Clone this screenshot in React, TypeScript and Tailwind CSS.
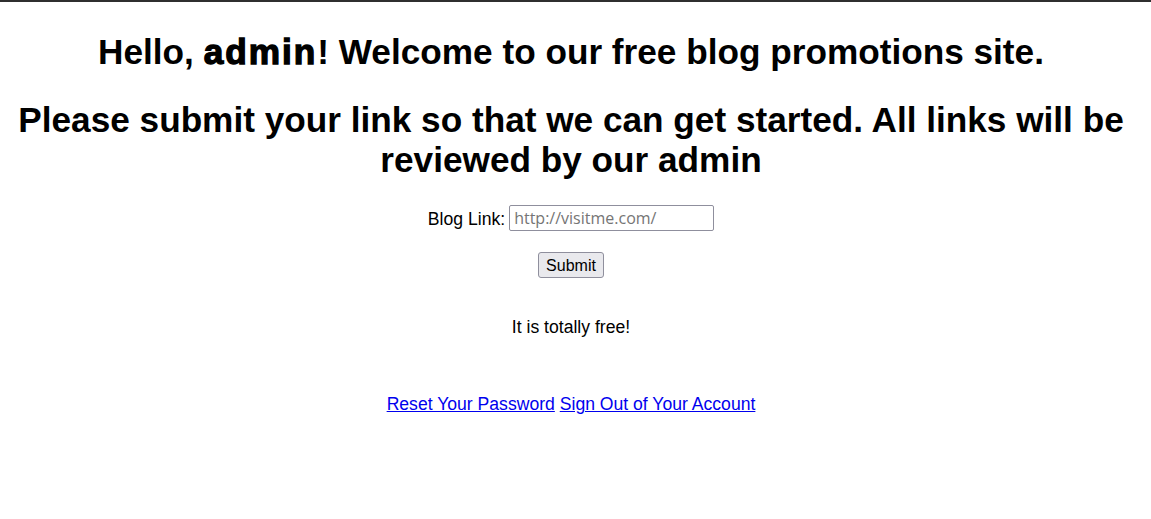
import React from "react";

export default function App() {
  return (
    <div
      className="min-h-[519px] bg-white border-t-2 border-[#2f2f2f] text-black pr-[9px]"
      style={{ fontFamily: '"Liberation Sans", Arial, sans-serif' }}
    >
      <h1 className="mt-[29.5px] text-center text-[35.2px] leading-[40.5px] font-bold">
        Hello,{" "}
        <span className="font-bold tracking-[2px] [-webkit-text-stroke:1.3px_black]">admin</span>
        ! Welcome to our free blog promotions site.
      </h1>
      <h2 className="mt-[27.5px] text-center text-[35.2px] leading-[40.5px] font-bold">
        Please submit your link so that we can get started. All links will be reviewed by our admin
      </h2>
      <div className="mt-[24.5px] flex items-center justify-center gap-[4px] text-[17.6px]">
        <label className="leading-[20px] pt-[1px]">Blog Link:</label>
        <input
          type="text"
          placeholder="http://visitme.com/"
          className="w-[205px] h-[26px] border border-[#8f8f9d] rounded-[2px] px-[4px] text-[16px] placeholder:text-[#757575] outline-none"
          style={{ fontFamily: '"Open Sans", "Liberation Sans", sans-serif' }}
        />
      </div>
      <div className="mt-[21px] flex justify-center">
        <button className="h-[26px] w-[66px] pt-[1px] bg-[#e9e9ed] border border-[#8f8f9d] rounded-[3px] text-[16px] leading-[18px]">
          Submit
        </button>
      </div>
      <p className="mt-[39px] text-center text-[17.6px] leading-[20px]">It is totally free!</p>
      <p className="mt-[57px] text-center text-[17.6px] leading-[20px]">
        <a href="#" className="text-[#0000ee] underline">
          Reset Your Password
        </a>{" "}
        <a href="#" className="text-[#0000ee] underline">
          Sign Out of Your Account
        </a>
      </p>
    </div>
  );
}
